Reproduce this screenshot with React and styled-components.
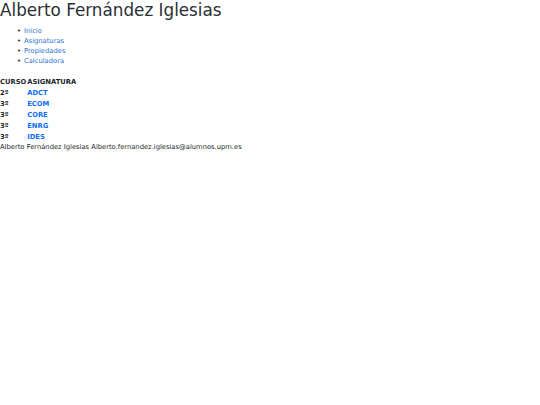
import React from "react";
import styled, { createGlobalStyle } from "styled-components";

const GlobalStyle = createGlobalStyle`
  html, body {
    margin: 0;
    padding: 0;
    background: #ffffff;
  }
  body {
    font-family: "DejaVu Sans", "Liberation Sans", sans-serif;
    font-size: 6.75px;
    line-height: 10px;
    color: #212529;
  }
`;

const Title = styled.h1`
  margin: 0 0 6px;
  font-size: 16.8px;
  font-weight: 400;
  line-height: 20px;
  color: #2b2f33;
`;

const NavList = styled.ul`
  margin: 0 0 11px;
  padding-left: 17px;
  list-style: none;
`;

const NavItem = styled.li`
  line-height: 10px;

  &::before {
    content: "•";
    display: inline-block;
    width: 7px;
    color: #212529;
  }
`;

const Link = styled.a`
  color: ${(props) => (props.strong ? "#0d6efd" : "#1f74d0")};
  font-weight: ${(props) => (props.strong ? 700 : 400)};
  text-decoration: none;
`;

const Table = styled.table`
  border-collapse: collapse;
  border-spacing: 0;
`;

const HeadCell = styled.th`
  padding: 0 1px 0 0;
  height: 10px;
  text-align: left;
  font-weight: 700;
  text-transform: uppercase;
`;

const Cell = styled.td`
  padding: 0;
  height: 11px;
  font-weight: 700;
`;

const Footer = styled.footer`
  line-height: 10px;
`;

const subjects = [
  { course: "2º", code: "ADCT" },
  { course: "3º", code: "ECOM" },
  { course: "3º", code: "CORE" },
  { course: "3º", code: "ENRG" },
  { course: "3º", code: "IDES" },
];

const App = () => (
  <>
    <GlobalStyle />
    <Title>Alberto Fernández Iglesias</Title>
    <NavList>
      {["Inicio", "Asignaturas", "Propiedades", "Calculadora"].map((item) => (
        <NavItem key={item}>
          <Link href="#">{item}</Link>
        </NavItem>
      ))}
    </NavList>
    <Table>
      <thead>
        <tr>
          <HeadCell>Curso</HeadCell>
          <HeadCell>Asignatura</HeadCell>
        </tr>
      </thead>
      <tbody>
        {subjects.map((s) => (
          <tr key={s.code}>
            <Cell>{s.course}</Cell>
            <Cell>
              <Link href="#" strong>
                {s.code}
              </Link>
            </Cell>
          </tr>
        ))}
      </tbody>
    </Table>
    <Footer>Alberto Fernández Iglesias Alberto.fernandez.iglesias@alumnos.upm.es</Footer>
  </>
);

export default App;
